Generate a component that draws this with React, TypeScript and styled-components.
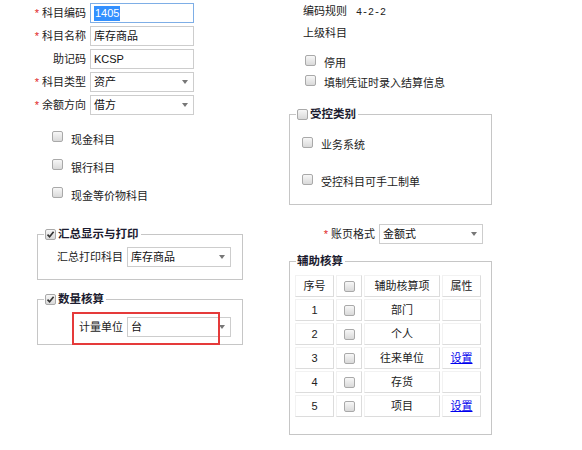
import React from 'react';
import styled, { createGlobalStyle } from 'styled-components';

const Global = createGlobalStyle`
  html, body { margin: 0; padding: 0; background: #fff; }
  body {
    font-family: "Liberation Sans", "Noto Sans CJK SC", sans-serif;
    font-size: 11px;
    color: #222;
  }
`;

const Page = styled.div`
  display: flex;
  width: 582px;
  height: 450px;
  overflow: hidden;
`;

const LeftCol = styled.div`
  width: 289px;
  flex: none;
  padding-top: 3px;
  box-sizing: border-box;
`;

const RightCol = styled.div`
  width: 203px;
  flex: none;
  padding-top: 1px;
`;

const FormRow = styled.div<{ $mt?: number }>`
  display: flex;
  align-items: center;
  height: 20px;
  margin-top: ${(p) => p.$mt ?? 0}px;
  margin-bottom: 3px;
`;

const FieldLabel = styled.div<{ $w?: number }>`
  width: ${(p) => p.$w ?? 90}px;
  flex: none;
  box-sizing: border-box;
  padding-right: 4px;
  text-align: right;
  white-space: nowrap;
  line-height: 20px;
`;

const Req = styled.span`
  color: #e02424;
  margin-right: 3px;
`;

const Box = styled.div<{ $w?: number; $focus?: boolean }>`
  width: ${(p) => p.$w ?? 104}px;
  height: 20px;
  flex: none;
  box-sizing: border-box;
  border: 1px solid ${(p) => (p.$focus ? '#7eaee6' : '#cdcdcd')};
  background: #fff;
  padding: 0 5px 0 3px;
  display: flex;
  align-items: center;
  line-height: 18px;
  white-space: nowrap;
  color: #111;
`;

const Highlight = styled.span`
  background: #3390ff;
  color: #fff;
  padding: 0 1px;
  line-height: 15px;
`;

const Arrow = styled.span`
  margin-left: auto;
  width: 0;
  height: 0;
  border-left: 3.5px solid transparent;
  border-right: 3.5px solid transparent;
  border-top: 4px solid #777;
`;

const CheckBox = styled.span`
  width: 11px;
  height: 11px;
  flex: none;
  box-sizing: border-box;
  border: 1px solid #a9a9a9;
  border-radius: 2px;
  background: linear-gradient(#f7f7f7, #d9d9d9);
  display: inline-flex;
  align-items: center;
  justify-content: center;
`;

const CheckList = styled.div<{ $pl: number; $mt: number; $gap?: number }>`
  display: flex;
  flex-direction: column;
  gap: ${(p) => p.$gap ?? 0}px;
  padding-left: ${(p) => p.$pl}px;
  margin-top: ${(p) => p.$mt}px;
`;

const CheckItem = styled.div<{ $h: number }>`
  display: flex;
  align-items: flex-start;
  gap: 8px;
  height: ${(p) => p.$h}px;
`;

const CheckText = styled.span<{ $pt?: number }>`
  line-height: 17px;
  padding-top: ${(p) => p.$pt ?? 0}px;
  white-space: nowrap;
`;

const Group = styled.fieldset<{ $w: number; $ml?: number; $mt: number; $pt: number; $pb: number }>`
  margin: ${(p) => p.$mt}px 0 0 ${(p) => p.$ml ?? 0}px;
  min-width: 0;
  width: ${(p) => p.$w}px;
  box-sizing: border-box;
  border: 1px solid #c6c6c6;
  padding: ${(p) => p.$pt}px 6px ${(p) => p.$pb}px 6px;
`;

const Legend = styled.legend`
  padding: 0 2px 0 1px;
  line-height: 14px;
  height: 14px;
`;

const LegendInner = styled.span`
  display: inline-flex;
  align-items: center;
  gap: 2px;
  font-weight: bold;
  font-size: 11.5px;
  color: #1c1c30;
  white-space: nowrap;
`;

const SubRow = styled.div<{ $ml: number }>`
  position: relative;
  display: flex;
  align-items: center;
  height: 20px;
  margin-left: ${(p) => p.$ml}px;
`;

const RedMark = styled.div`
  position: absolute;
  left: 15px;
  top: -5px;
  width: 148px;
  height: 33px;
  box-sizing: border-box;
  border: 2px solid #e53a3a;
  pointer-events: none;
`;

const InfoLine = styled.div`
  padding-left: 14px;
  line-height: 21px;
  white-space: nowrap;
`;

const Mono = styled.span`
  font-family: "Liberation Mono", monospace;
  font-size: 10px;
  margin-left: 9px;
`;

const Table = styled.table`
  border-collapse: separate;
  border-spacing: 2px;
  margin-left: -3px;
`;

const Cell = styled.td<{ $w: number }>`
  width: ${(p) => p.$w}px;
  height: 22px;
  box-sizing: border-box;
  padding: 0;
  text-align: center;
  vertical-align: middle;
  line-height: 20px;
  border: 1px solid;
  border-color: #f2f2f2 #dcdcdc #dcdcdc #f2f2f2;
  color: #222;
  white-space: nowrap;
`;

const CellCheck = styled.div`
  display: flex;
  justify-content: center;
  align-items: center;
`;

const Link = styled.a`
  color: #0000ee;
  text-decoration: underline;
  cursor: pointer;
`;

const Tick = () => (
  <svg width="9" height="9" viewBox="0 0 9 9">
    <path d="M1.5 4.6 L3.6 6.8 L7.6 1.8" fill="none" stroke="#333" strokeWidth="1.6" />
  </svg>
);

const rows: { no: number; name: string; link: boolean }[] = [
  { no: 1, name: '部门', link: false },
  { no: 2, name: '个人', link: false },
  { no: 3, name: '往来单位', link: true },
  { no: 4, name: '存货', link: false },
  { no: 5, name: '项目', link: true },
];

export default function App() {
  return (
    <>
      <Global />
      <Page>
        <LeftCol>
          <FormRow>
            <FieldLabel><Req>*</Req>科目编码</FieldLabel>
            <Box $focus><Highlight>1405</Highlight></Box>
          </FormRow>
          <FormRow>
            <FieldLabel><Req>*</Req>科目名称</FieldLabel>
            <Box>库存商品</Box>
          </FormRow>
          <FormRow>
            <FieldLabel>助记码</FieldLabel>
            <Box>KCSP</Box>
          </FormRow>
          <FormRow>
            <FieldLabel><Req>*</Req>科目类型</FieldLabel>
            <Box>资产<Arrow /></Box>
          </FormRow>
          <FormRow>
            <FieldLabel><Req>*</Req>余额方向</FieldLabel>
            <Box>借方<Arrow /></Box>
          </FormRow>

          <CheckList $pl={52} $mt={16}>
            <CheckItem $h={28}><CheckBox /><CheckText $pt={1}>现金科目</CheckText></CheckItem>
            <CheckItem $h={28}><CheckBox /><CheckText $pt={1}>银行科目</CheckText></CheckItem>
            <CheckItem $h={28}><CheckBox /><CheckText $pt={1}>现金等价物科目</CheckText></CheckItem>
          </CheckList>

          <Group $w={206} $ml={37} $mt={12} $pt={6} $pb={12}>
            <Legend>
              <LegendInner><CheckBox><Tick /></CheckBox>汇总显示与打印</LegendInner>
            </Legend>
            <SubRow $ml={13}>
              <FieldLabel $w={70}>汇总打印科目</FieldLabel>
              <Box>库存商品<Arrow /></Box>
            </SubRow>
          </Group>

          <Group $w={206} $ml={37} $mt={12} $pt={11} $pb={7}>
            <Legend>
              <LegendInner><CheckBox><Tick /></CheckBox>数量核算</LegendInner>
            </Legend>
            <SubRow $ml={13}>
              <FieldLabel $w={70}>计量单位</FieldLabel>
              <Box>台<Arrow /></Box>
              <RedMark />
            </SubRow>
          </Group>
        </LeftCol>

        <RightCol>
          <InfoLine>编码规则<Mono>4-2-2</Mono></InfoLine>
          <InfoLine>上级科目</InfoLine>

          <CheckList $pl={16} $mt={11}>
            <CheckItem $h={20}><CheckBox /><CheckText>停用</CheckText></CheckItem>
            <CheckItem $h={20}><CheckBox /><CheckText>填制凭证时录入结算信息</CheckText></CheckItem>
          </CheckList>

          <Group $w={203} $mt={12} $pt={16} $pb={14}>
            <Legend>
              <LegendInner><CheckBox />受控类别</LegendInner>
            </Legend>
            <CheckList $pl={6} $mt={0} $gap={21}>
              <CheckItem $h={16}><CheckBox /><CheckText>业务系统</CheckText></CheckItem>
              <CheckItem $h={16}><CheckBox /><CheckText>受控科目可手工制单</CheckText></CheckItem>
            </CheckList>
          </Group>

          <FormRow $mt={19}>
            <FieldLabel><Req>*</Req>账页格式</FieldLabel>
            <Box>金额式<Arrow /></Box>
          </FormRow>

          <Group $w={203} $mt={10} $pt={5} $pb={15}>
            <Legend>
              <LegendInner>辅助核算</LegendInner>
            </Legend>
            <Table>
              <tbody>
                <tr>
                  <Cell $w={39}>序号</Cell>
                  <Cell $w={26}><CellCheck><CheckBox /></CellCheck></Cell>
                  <Cell $w={76}>辅助核算项</Cell>
                  <Cell $w={39}>属性</Cell>
                </tr>
                {rows.map((r) => (
                  <tr key={r.no}>
                    <Cell $w={39}>{r.no}</Cell>
                    <Cell $w={26}><CellCheck><CheckBox /></CellCheck></Cell>
                    <Cell $w={76}>{r.name}</Cell>
                    <Cell $w={39}>{r.link ? <Link>设置</Link> : null}</Cell>
                  </tr>
                ))}
              </tbody>
            </Table>
          </Group>
        </RightCol>
      </Page>
    </>
  );
}
